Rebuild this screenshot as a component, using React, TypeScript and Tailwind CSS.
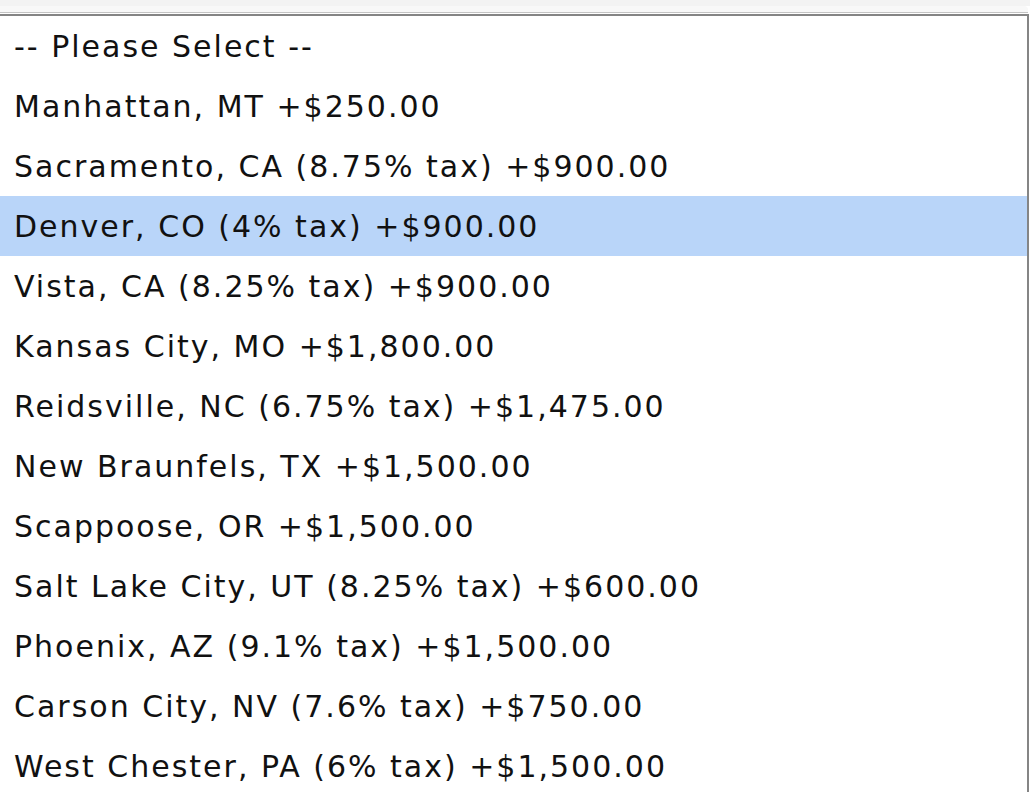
const options = [
  '-- Please Select --',
  'Manhattan, MT +$250.00',
  'Sacramento, CA (8.75% tax) +$900.00',
  'Denver, CO (4% tax) +$900.00',
  'Vista, CA (8.25% tax) +$900.00',
  'Kansas City, MO +$1,800.00',
  'Reidsville, NC (6.75% tax) +$1,475.00',
  'New Braunfels, TX +$1,500.00',
  'Scappoose, OR +$1,500.00',
  'Salt Lake City, UT (8.25% tax) +$600.00',
  'Phoenix, AZ (9.1% tax) +$1,500.00',
  'Carson City, NV (7.6% tax) +$750.00',
  'West Chester, PA (6% tax) +$1,500.00',
];

export default function App() {
  const selected = 3;
  return (
    <div className="w-[1030px] h-[792px] overflow-hidden bg-white">
      {/* window chrome strip */}
      <div className="h-[6px] bg-[#f3f3f3]" />
      <div className="h-[7px] bg-[#f8f8f8] border-b border-[#c4c4c4] mr-[2px] rounded-tr-[4px]" />
      <div className="h-[1px] bg-white" />
      <div className="mr-[1px] border-t-2 border-r-2 border-[#858585]">
        <ul className="font-['DejaVu_Sans',sans-serif] text-[30px] tracking-[2px] text-[#111]">
          {options.map((o, i) => (
            <li
              key={o}
              className={`h-[60px] flex items-center pl-[14px] whitespace-nowrap ${
                i === selected ? 'bg-[#b9d5f9]' : ''
              }`}
            >
              {o}
            </li>
          ))}
        </ul>
      </div>
    </div>
  );
}
